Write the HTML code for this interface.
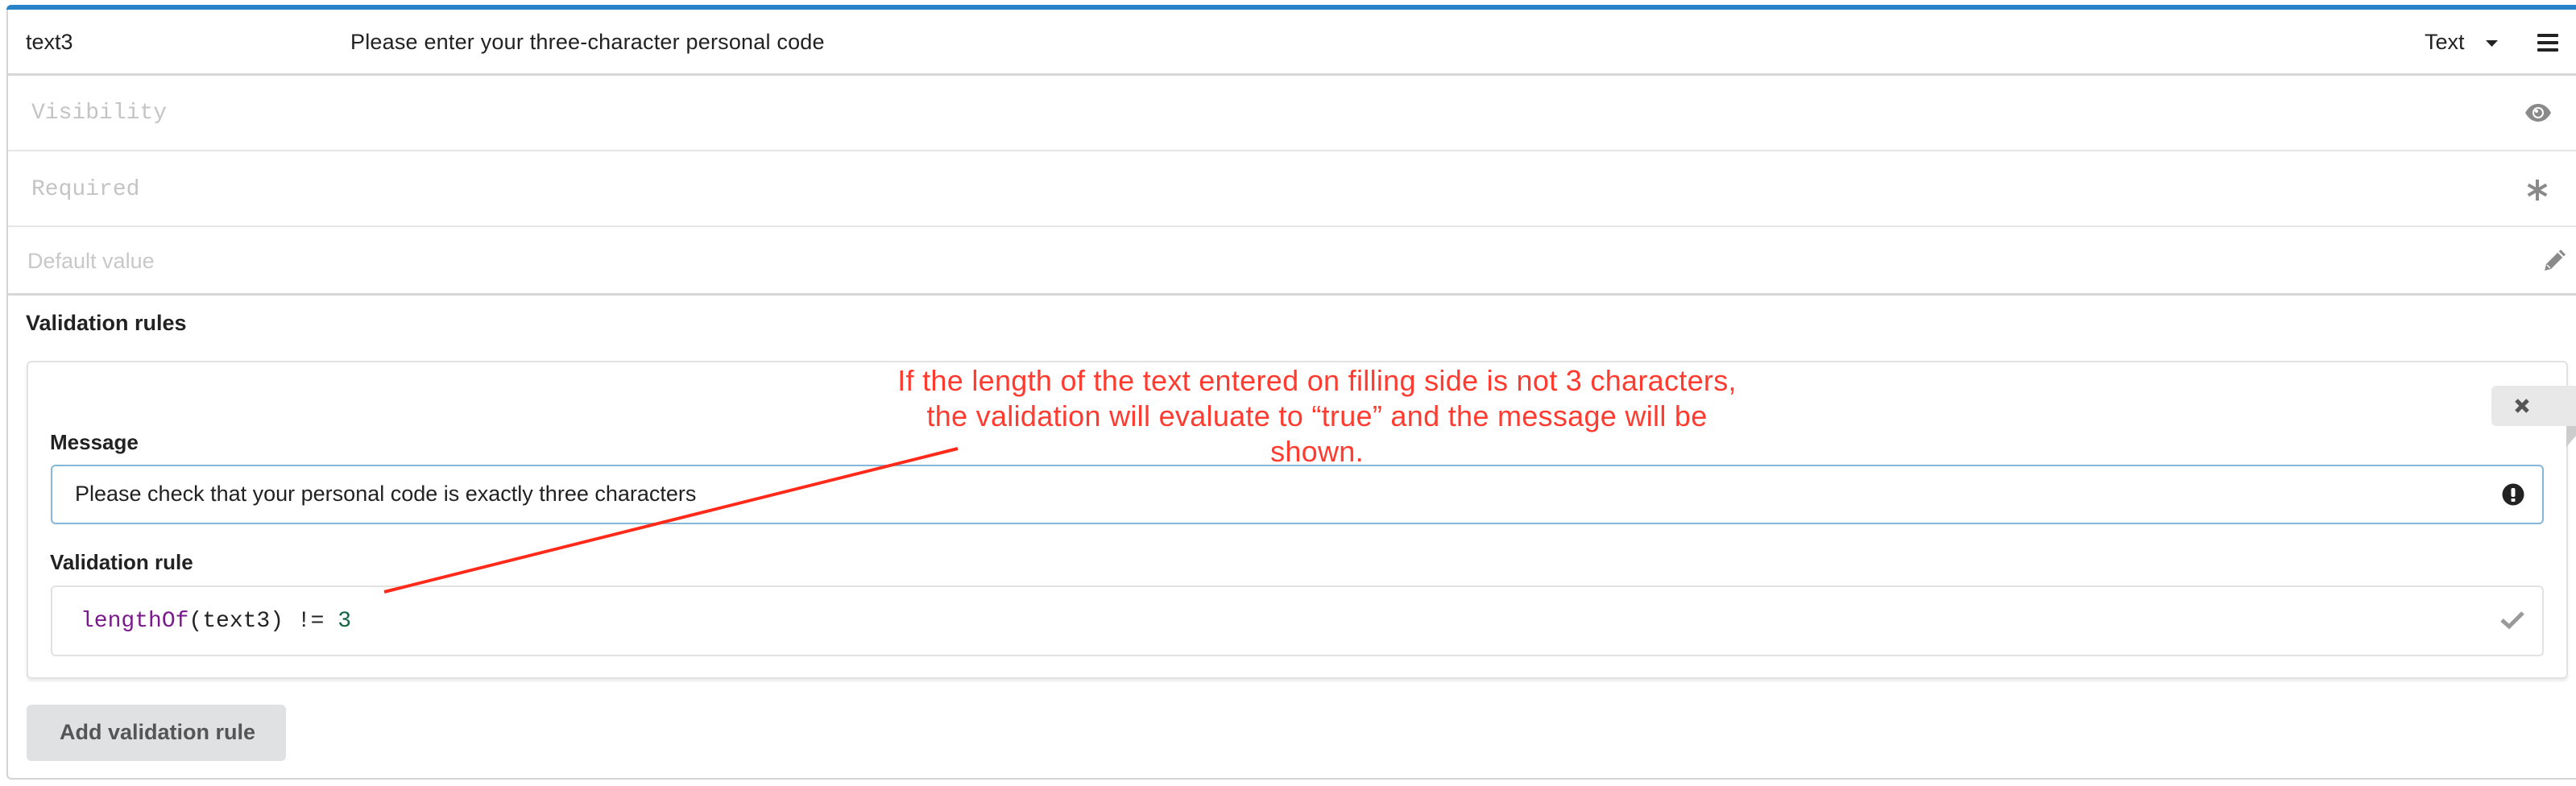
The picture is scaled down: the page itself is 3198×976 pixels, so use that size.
<!DOCTYPE html>
<html><head><meta charset="utf-8"><style>
*{margin:0;padding:0;box-sizing:border-box}
html,body{width:3198px;height:976px;background:#fff;overflow:hidden;position:relative;font-family:"Liberation Sans",sans-serif}
.a{position:absolute}
.t{position:absolute;white-space:nowrap;line-height:1}
.mono{font-family:"Liberation Mono",monospace}
</style></head><body>
<div class="a" style="left:8px;top:6px;width:3200px;height:962px;border:2px solid #d4d4d4;border-top:none;border-radius:6px"></div>
<div class="a" style="left:8px;top:6px;width:3200px;height:6px;background:#2a82c9;border-radius:6px 0 0 0"></div>
<div class="a" style="left:10px;top:91px;width:3190px;height:3px;background:#d6d6d6"></div>
<div class="a" style="left:10px;top:186px;width:3190px;height:2px;background:#e6e6e6"></div>
<div class="a" style="left:10px;top:280px;width:3190px;height:2px;background:#e6e6e6"></div>
<div class="a" style="left:10px;top:364px;width:3190px;height:3px;background:#d6d6d6"></div>

<div class="t" style="left:32px;top:39px;font-size:27px;color:#222">text3</div>
<div class="t" style="left:435px;top:39px;font-size:27px;color:#222;letter-spacing:0.2px">Please enter your three-character personal code</div>
<div class="t" style="left:3010px;top:39px;font-size:27px;color:#222">Text</div>
<svg class="a" style="left:3086px;top:50px" width="16" height="9"><path d="M0 0H15L7.5 8Z" fill="#222"/></svg>
<svg class="a" style="left:3150px;top:41px" width="26" height="24"><rect y="1" width="26" height="4" rx="1" fill="#222"/><rect y="10" width="26" height="4" rx="1" fill="#222"/><rect y="19" width="26" height="4" rx="1" fill="#222"/></svg>

<div class="t mono" style="left:39px;top:127px;font-size:28px;color:#c4c4c4">Visibility</div>
<div class="t mono" style="left:39px;top:222px;font-size:28px;color:#c4c4c4">Required</div>
<div class="t" style="left:34px;top:311px;font-size:27px;color:#c8c8c8">Default value</div>

<svg class="a" style="left:3134px;top:128px" width="34" height="24" viewBox="0 0 34 24"><path d="M1 12C6 3 12 1 17 1S28 3 33 12C28 21 22 23 17 23S6 21 1 12Z" fill="#8a8a8a"/><circle cx="17" cy="12" r="7" fill="#fff"/><circle cx="17" cy="12" r="5" fill="#8a8a8a"/><circle cx="15" cy="10" r="2" fill="#fff"/></svg>
<svg class="a" style="left:3136px;top:222px" width="28" height="28" viewBox="0 0 28 28"><g stroke="#8a8a8a" stroke-width="4"><path d="M14 1V27"/><path d="M2.7 7.5L25.3 20.5"/><path d="M2.7 20.5L25.3 7.5"/></g></svg>
<svg class="a" style="left:3157px;top:308px" width="30" height="30" viewBox="0 0 30 30"><path d="M22 2L28 8L10 26L2 28L4 20Z" fill="#8a8a8a"/><path d="M19 5L25 11" stroke="#fff" stroke-width="2"/><path d="M5 21L9 25" stroke="#fff" stroke-width="1.5"/></svg>

<div class="t" style="left:32px;top:388px;font-size:27px;color:#222;font-weight:bold">Validation rules</div>

<div class="a" style="left:33px;top:448px;width:3155px;height:395px;border:2px solid #e2e2e2;border-radius:6px;box-shadow:0 3px 3px rgba(0,0,0,0.08)"></div>
<div class="a" style="left:3093px;top:479px;width:110px;height:50px;background:#e8e8e8;border-radius:6px"></div>
<svg class="a" style="left:3121px;top:495px" width="20" height="18" viewBox="0 0 20 18"><path d="M3 2L17 16M17 2L3 16" stroke="#555" stroke-width="5"/></svg>
<svg class="a" style="left:3186px;top:529px" width="12" height="26"><path d="M12 0V12L0 26V0Z" fill="#ccc"/></svg>

<div class="t" style="left:62px;top:536px;font-size:26px;color:#222;font-weight:bold">Message</div>
<div class="a" style="left:63px;top:577px;width:3095px;height:74px;border:2px solid #85b7d9;border-radius:6px"></div>
<div class="t" style="left:93px;top:600px;font-size:27px;color:#222">Please check that your personal code is exactly three characters</div>
<svg class="a" style="left:3106px;top:600px" width="28" height="28" viewBox="0 0 28 28"><circle cx="14" cy="14" r="13.5" fill="#222"/><rect x="11.5" y="6" width="5" height="11" rx="2" fill="#fff"/><rect x="11.5" y="19" width="5" height="4" rx="1" fill="#fff"/></svg>

<div class="t" style="left:62px;top:685px;font-size:26px;color:#222;font-weight:bold">Validation rule</div>
<div class="a" style="left:63px;top:727px;width:3095px;height:88px;border:2px solid #e2e2e2;border-radius:6px"></div>
<div class="t mono" style="left:100px;top:758px;font-size:28px;color:#222"><span style="color:#7a1a8c">lengthOf</span>(text3) != <span style="color:#116644">3</span></div>
<svg class="a" style="left:3104px;top:758px" width="30" height="24" viewBox="0 0 30 24"><path d="M2 12L11 20L28 3" stroke="#999" stroke-width="5" fill="none"/></svg>

<div class="a" style="left:33px;top:875px;width:322px;height:70px;background:#e0e1e3;border-radius:6px"></div>
<div class="t" style="left:74px;top:896px;font-size:27px;color:#555;font-weight:bold">Add validation rule</div>

<svg class="a" style="left:0;top:0" width="3198" height="976"><line x1="477" y1="735" x2="1189" y2="557" stroke="#ff2a1a" stroke-width="4"/></svg>
<div class="a" style="left:1035px;top:451px;width:1200px;text-align:center;font-size:36px;line-height:44px;color:#ff3b30;font-family:'Liberation Sans',sans-serif;letter-spacing:0.3px">If the length of the text entered on filling side is not 3 characters,<br>the validation will evaluate to “true” and the message will be<br>shown.</div>
</body></html>
